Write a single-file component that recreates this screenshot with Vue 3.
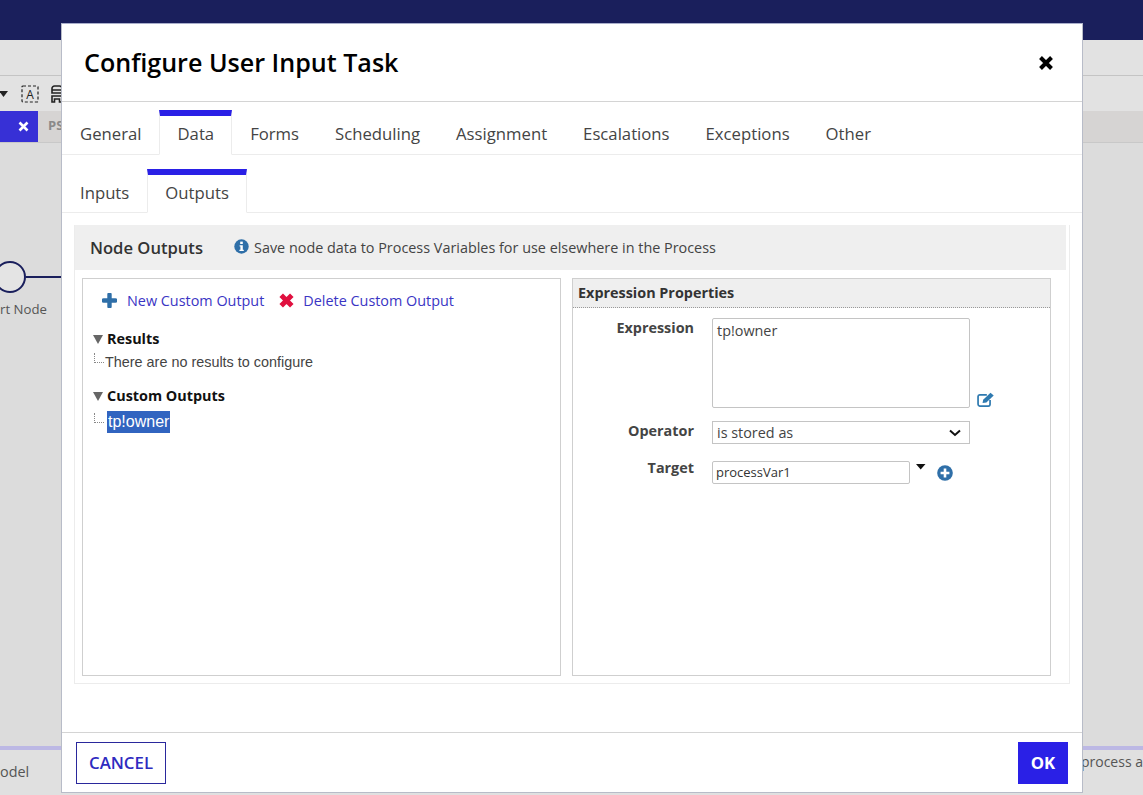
<template>
  <div class="page">
    <div class="topbar"></div>
    <div class="toolbar"></div>
    <div class="toolbar-row">
      <svg class="tb-caret" width="8" height="6" viewBox="0 0 8 6"><path d="M-1 0h9L3.500 6z" fill="#222" /></svg>
      <svg class="tb-a" width="18" height="18" viewBox="0 0 18 18">
        <rect x="1" y="1" width="16" height="16" rx="1" fill="none" stroke="#222" stroke-width="1.200" stroke-dasharray="3 2" />
        <text x="9" y="14" font-size="12" text-anchor="middle" fill="#222" font-family="Open Sans">A</text>
      </svg>
      <svg class="tb-b" width="12" height="18" viewBox="0 0 12 18">
        <path d="M1 8V3.500a2.500 2.500 0 0 1 2.500-2.500h5A2.500 2.500 0 0 1 11 3.500V8zM1 11h10v6H8.500v-3h-5v3H1zM1 5h10" fill="none" stroke="#222" stroke-width="1.600" />
      </svg>
    </div>
    <div class="tabstrip">
      <div class="strip-active">
        <svg width="11" height="11" viewBox="0 0 11 11"><path d="M1.500 1.500l8 8M9.500 1.500l-8 8" stroke="#fff" stroke-width="2.600" /></svg>
      </div>
      <span class="strip-label">PS</span>
    </div>
    <div class="canvas">
      <div class="node-row">
        <div class="start-circle"></div>
        <div class="flow-line"></div>
      </div>
      <div class="node-label">rt Node</div>
    </div>
    <div class="statusbar">
      <span>odel</span>
      <span>process a</span>
    </div>

    <div class="modal">
      <header class="modal-head">
        <h1>Configure User Input Task</h1>
        <svg width="16" height="16" viewBox="0 0 16 16"><path d="M2.500 2.500l11 11M13.500 2.500l-11 11" stroke="#000" stroke-width="4" /></svg>
      </header>

      <nav class="tabs main-tabs">
        <a v-for="t in mainTabs" :key="t" class="tab" :class="{ active: t === 'Data' }">{{ t }}</a>
      </nav>
      <nav class="tabs sub-tabs">
        <a v-for="t in subTabs" :key="t" class="tab" :class="{ active: t === 'Outputs' }">{{ t }}</a>
      </nav>

      <section class="panel">
        <div class="panel-head">
          <h2>Node Outputs</h2>
          <svg class="info" width="15" height="15" viewBox="0 0 15 15">
            <circle cx="7.500" cy="7.500" r="7.200" fill="#2f6fa8" />
            <rect x="6.200" y="2.600" width="2.600" height="2.400" fill="#fff" />
            <path d="M5.600 6.200h3.200v4.600h1v1.200H5.400v-1.200h1V7.400h-.8z" fill="#fff" />
          </svg>
          <span class="hint">Save node data to Process Variables for use elsewhere in the Process</span>
        </div>

        <div class="columns">
          <div class="box tree-box">
            <div class="actions">
              <svg width="15" height="15" viewBox="0 0 15 15"><path d="M7.500 1.500v12M1.500 7.500h12" stroke="#2f6fa8" stroke-width="4.400" stroke-linecap="round" /></svg>
              <a class="link first">New Custom Output</a>
              <svg width="15" height="15" viewBox="0 0 15 15"><path d="M2.200 2.200l10.600 10.600M12.800 2.200L2.200 12.800" stroke="#e0103f" stroke-width="5" /></svg>
              <a class="link">Delete Custom Output</a>
            </div>

            <div class="tree-group">
              <div class="tree-title"><i class="tri"></i>Results</div>
              <div class="tree-leaf"><i class="elbow"></i><span>There are no results to configure</span></div>
            </div>
            <div class="tree-group custom">
              <div class="tree-title"><i class="tri"></i>Custom Outputs</div>
              <div class="tree-leaf"><i class="elbow"></i><span class="selected">tp!owner</span></div>
            </div>
          </div>

          <div class="box props-box">
            <div class="props-head">Expression Properties</div>
            <div class="form">
              <div class="form-row expr">
                <label>Expression</label>
                <div class="textarea">tp!owner</div>
                <svg class="edit" width="17" height="15" viewBox="0 0 15.500 14">
                  <path d="M12 7.500V11.500a1.600 1.600 0 0 1-1.600 1.600H2.300A1.600 1.600 0 0 1 .8 11.500V4.200A1.600 1.600 0 0 1 2.300 2.600H9" fill="none" stroke="#2f7ab0" stroke-width="1.600" />
                  <path d="M5 10.200l.6-3L12.400.6l3 2.600-6.800 6.600z" fill="#2f7ab0" />
                </svg>
              </div>
              <div class="form-row op">
                <label>Operator</label>
                <div class="select">
                  <span>is stored as</span>
                  <svg width="12" height="8" viewBox="0 0 12 8"><path d="M1 1.400l5 4.600 5-4.600" fill="none" stroke="#111" stroke-width="2" /></svg>
                </div>
              </div>
              <div class="form-row target">
                <label>Target</label>
                <div class="input">processVar1</div>
                <svg class="pick" width="10" height="6" viewBox="0 0 10 6"><path d="M0 0h9.500L4.700 5.500z" fill="#111" /></svg>
                <svg class="plus" width="16" height="16" viewBox="0 0 16 16">
                  <circle cx="8" cy="8" r="7.800" fill="#2f6fa8" />
                  <path d="M8 3.600v8.800M3.600 8h8.800" stroke="#fff" stroke-width="2.600" />
                </svg>
              </div>
            </div>
          </div>
        </div>
      </section>

      <footer class="modal-foot">
        <button class="btn cancel">CANCEL</button>
        <button class="btn ok">OK</button>
      </footer>
    </div>
  </div>
</template>

<script setup>
const mainTabs = ['General', 'Data', 'Forms', 'Scheduling', 'Assignment', 'Escalations', 'Exceptions', 'Other']
const subTabs = ['Inputs', 'Outputs']
</script>

<style>
html, body {
  margin: 0;
  overflow: hidden;
}
</style>

<style scoped>
.page {
  position: relative;
  width: 1143px;
  height: 795px;
  overflow: hidden;
  display: flex;
  flex-direction: column;
  background: #dcdcdc;
  font-family: "Open Sans", sans-serif;
  color: #333;
}
.topbar {
  height: 40px;
  background: #1a1f5c;
}
.toolbar {
  height: 36px;
  box-sizing: border-box;
  background: #e2e2e2;
  border-bottom: 1px solid #c4c4c4;
}
.toolbar-row {
  height: 35px;
  background: #e2e2e2;
  display: flex;
  align-items: center;
  padding-top: 1px;
  box-sizing: border-box;
}
.tb-caret {
  margin-right: 13px;
}
.tb-a {
  margin-right: 12px;
}
.tabstrip {
  height: 32px;
  box-sizing: border-box;
  background: #d6d4d3;
  border-bottom: 1px solid #c8c8c8;
  display: flex;
  align-items: stretch;
}
.strip-active {
  width: 38px;
  background: #3730d6;
  display: flex;
  align-items: center;
  justify-content: flex-end;
  padding-right: 9px;
  box-sizing: border-box;
}
.strip-label {
  margin-left: 10px;
  font-size: 13px;
  font-weight: 700;
  color: #8a8a8a;
  line-height: 29px;
}
.canvas {
  flex: 1;
  background: #dcdcdc;
  padding-top: 118px;
  font-size: 13.2px;
}
.node-row {
  display: flex;
  align-items: center;
}
.start-circle {
  width: 32px;
  height: 32px;
  margin-left: -6px;
  box-sizing: border-box;
  border: 2px solid #1a1f5c;
  border-radius: 50%;
  background: #e4e4e4;
}
.flow-line {
  width: 40px;
  height: 2px;
  background: #1a1f5c;
}
.node-label {
  margin-top: 7px;
  color: #555;
}
.statusbar {
  height: 49px;
  box-sizing: border-box;
  border-top: 4px solid #bcb8e4;
  background: #e0e0e0;
  display: flex;
  justify-content: space-between;
  font-size: 14px;
  color: #555;
  padding-top: 2px;
  line-height: 19px;
}
.statusbar span:first-child {
  padding-top: 10px;
  font-size: 14.4px;
}

.modal {
  position: absolute;
  left: 61px;
  top: 23px;
  width: 1022px;
  height: 770px;
  box-sizing: border-box;
  background: #fff;
  border: 1px solid #b8bcc8;
  border-top-color: #a9aecb;
  display: flex;
  flex-direction: column;
}
.modal-head {
  height: 78px;
  box-sizing: border-box;
  border-bottom: 1px solid #d4d4d4;
  display: flex;
  align-items: center;
  justify-content: space-between;
  padding: 0 28px 0 22px;
}
.modal-head h1 {
  margin: 0 0 2px;
  font-size: 25.1px;
  font-weight: 600;
  color: #000;
}
.tabs {
  display: flex;
  box-sizing: border-box;
  border-bottom: 1px solid #ececec;
  font-size: 16.72px;
  color: #444;
}
.main-tabs {
  height: 53px;
  padding-top: 8px;
}
.sub-tabs {
  height: 58px;
  padding-top: 14px;
}
.tab {
  box-sizing: border-box;
  height: calc(100% + 1px);
  padding: 6px 17px 0;
  line-height: 24px;
  border-top: 6px solid transparent;
  border-left: 1px solid transparent;
  border-right: 1px solid transparent;
}
.tab.active {
  background: #fff;
  border-top-color: #2a20e6;
  border-left-color: #ececec;
  border-right-color: #ececec;
  border-bottom: 1px solid #fff;
}
.panel {
  margin: 12px 12px 0;
  height: 459px;
  box-sizing: border-box;
  border: 1px solid #ececec;
  border-top: 0;
}
.panel-head {
  height: 45px;
  margin-right: 3px;
  background: #efefef;
  display: flex;
  align-items: center;
  padding-left: 15px;
}
.panel-head h2 {
  margin: 0 31px 0 0;
  font-size: 16.6px;
  font-weight: 600;
  color: #333;
}
.info {
  margin-right: 5px;
  margin-top: -2px;
}
.hint {
  font-size: 14.4px;
  color: #444;
}
.columns {
  display: flex;
  gap: 11px;
  margin: 8px 0 0 7px;
}
.box {
  height: 398px;
  box-sizing: border-box;
  border: 1px solid #cfcfcf;
}
.tree-box {
  width: 479px;
  padding: 11px 10px;
}
.actions {
  display: flex;
  align-items: center;
  height: 20px;
  font-size: 14.4px;
  padding-left: 9px;
}
.link {
  color: #3a35c4;
}
.link.first {
  margin: 0 15px 0 10px;
}
.actions svg + .link:last-child {
  margin-left: 9px;
}
.tree-group {
  margin-top: 19px;
}
.tree-group.custom {
  margin-top: 14px;
}
.tree-title {
  font-size: 14.4px;
  font-weight: 700;
  color: #111;
  line-height: 20px;
  display: flex;
  align-items: center;
}
.tri {
  width: 0;
  height: 0;
  border-left: 5px solid transparent;
  border-right: 5px solid transparent;
  border-top: 9px solid #666;
  margin-right: 4px;
}
.tree-leaf {
  display: flex;
  align-items: center;
  margin-top: 3px;
  font-family: "Liberation Sans", sans-serif;
  font-size: 14.4px;
  color: #444;
  line-height: 20px;
}
.custom .tree-leaf {
  margin-top: 5px;
  line-height: 22px;
}
.elbow {
  width: 10px;
  height: 10px;
  margin: -8px 1px 0 1px;
  border-left: 1px dotted #888;
  border-bottom: 1px dotted #888;
  box-sizing: border-box;
}
.selected {
  background: #3164c0;
  color: #fff;
  padding: 0 1px;
  margin-left: 2px;
  font-size: 16px;
}
.props-box {
  width: 479px;
}
.props-head {
  height: 29px;
  box-sizing: border-box;
  background: #efefef;
  border-bottom: 1px dotted #999;
  padding-left: 5px;
  font-size: 14.4px;
  font-weight: 700;
  color: #333;
  line-height: 27px;
}
.form {
  padding-top: 10px;
  font-size: 14.4px;
}
.form-row {
  display: flex;
  align-items: flex-start;
}
.form-row label {
  width: 121px;
  text-align: right;
  margin-right: 18px;
  font-weight: 700;
  color: #444;
  flex: none;
  line-height: 20px;
}
.expr {
  height: 103px;
}
.textarea {
  width: 258px;
  height: 90px;
  box-sizing: border-box;
  border: 1px solid #c4c4c4;
  border-radius: 2px;
  padding: 2px 4px;
  color: #444;
  line-height: 20px;
}
.edit {
  margin: 74px 0 0 7px;
}
.op {
  height: 40px;
}
.select {
  width: 258px;
  height: 23px;
  box-sizing: border-box;
  border: 1px solid #c4c4c4;
  display: flex;
  align-items: center;
  justify-content: space-between;
  padding: 0 8px 0 4px;
  color: #444;
}
.target label {
  margin-top: -3px;
}
.input {
  width: 198px;
  height: 23px;
  box-sizing: border-box;
  border: 1px solid #c4c4c4;
  border-radius: 2px;
  padding-left: 3px;
  font-size: 13px;
  line-height: 21px;
  color: #333;
}
.pick {
  margin: 3px 0 0 6px;
}
.plus {
  margin: 4px 0 0 11px;
}
.modal-foot {
  margin-top: auto;
  height: 60px;
  box-sizing: border-box;
  border-top: 1px solid #d4d4d4;
  display: flex;
  justify-content: space-between;
  padding: 9px 14px 0;
}
.btn {
  height: 42px;
  box-sizing: border-box;
  font-family: "Open Sans", sans-serif;
  font-size: 16.8px;
  font-weight: 600;
  border: 0;
  padding: 0 0 2px;
}
.cancel {
  width: 90px;
  background: #fff;
  border: 1px solid #2a289c;
  color: #2f2bc0;
}
.ok {
  width: 50px;
  background: #2a20e6;
  color: #fff;
  font-weight: 700;
}
</style>
